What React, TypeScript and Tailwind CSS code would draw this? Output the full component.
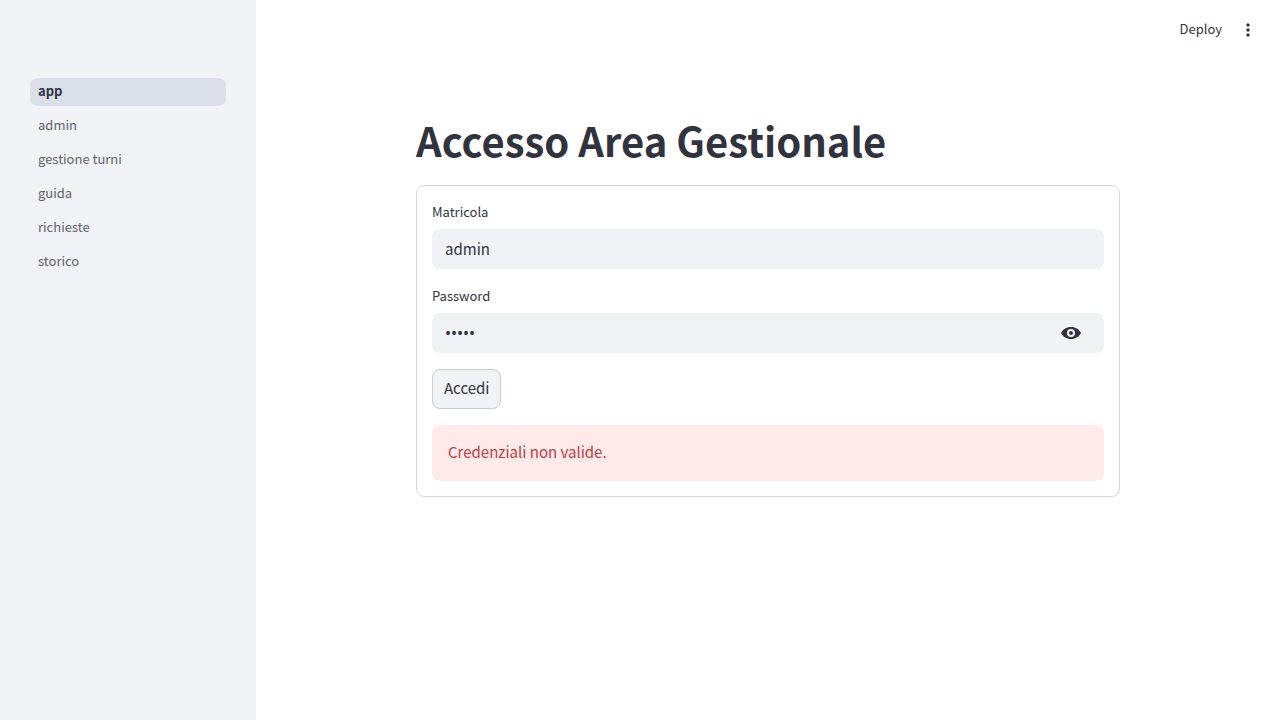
import { useState } from "react";

const pages = ["app", "admin", "gestione turni", "guida", "richieste", "storico"];

function Sidebar() {
  return (
    <aside className="w-64 shrink-0 bg-[#f0f2f6] px-[30px] pt-[78px]">
      <nav>
        <ul className="flex flex-col gap-1.5">
          {pages.map((page, i) => (
            <li key={page}>
              <a
                href={`#${page}`}
                aria-current={i === 0 ? "page" : undefined}
                className={
                  i === 0
                    ? "flex h-7 items-center rounded-lg bg-[#dadfe9] px-2 pb-0.5 text-[13px] font-bold text-[#31333f]"
                    : "flex h-7 items-center rounded-lg px-2 pb-0.5 text-[13px] text-[#5f616b]"
                }
              >
                {page}
              </a>
            </li>
          ))}
        </ul>
      </nav>
    </aside>
  );
}

function Header() {
  return (
    <header className="flex h-[60px] items-center justify-end gap-3.5 pr-5">
      <button type="button" className="pb-0.5 text-[13px]">
        Deploy
      </button>
      <button type="button" aria-label="Menu" className="flex size-6 items-center justify-center">
        <svg viewBox="0 0 24 24" className="size-5" fill="currentColor">
          <path d="M12 8c1.1 0 2-.9 2-2s-.9-2-2-2-2 .9-2 2 .9 2 2 2zm0 2c-1.1 0-2 .9-2 2s.9 2 2 2 2-.9 2-2-.9-2-2-2zm0 6c-1.1 0-2 .9-2 2s.9 2 2 2 2-.9 2-2-.9-2-2-2z" />
        </svg>
      </button>
    </header>
  );
}

export default function App() {
  const [user, setUser] = useState("admin");
  const [password, setPassword] = useState("admin");
  const [visible, setVisible] = useState(false);

  return (
    <div className="flex min-h-screen bg-white font-['Noto_Sans_CJK_SC',sans-serif] text-[#31333f]">
      <Sidebar />
      <div className="min-w-0 flex-1">
        <Header />
        <main className="mx-auto max-w-[736px] px-4 pt-[54px]">
          <h1 className="text-[40px] leading-[53px] font-bold">Accesso Area Gestionale</h1>
          <form
            onSubmit={(e) => e.preventDefault()}
            className="mt-[18px] flex flex-col gap-4 rounded-lg border border-[#d6d6d9] p-[15px]"
          >
            <div>
              <label htmlFor="matricola" className="mb-1 flex h-6 items-center pb-0.5 text-[13px]">
                Matricola
              </label>
              <input
                id="matricola"
                value={user}
                onChange={(e) => setUser(e.target.value)}
                className="block h-10 w-full rounded-lg bg-[#f0f2f6] px-[13px] pb-0.5 text-[15px] outline-none"
              />
            </div>
            <div>
              <label htmlFor="password" className="mb-1 flex h-6 items-center pb-0.5 text-[13px]">
                Password
              </label>
              <div className="flex h-10 items-center rounded-lg bg-[#f0f2f6] pr-[23px]">
                <input
                  id="password"
                  type={visible ? "text" : "password"}
                  value={password}
                  onChange={(e) => setPassword(e.target.value)}
                  className="h-full min-w-0 flex-1 px-[13px] font-['Noto_Sans',sans-serif] text-base outline-none"
                />
                <button type="button" aria-label="Show password" onClick={() => setVisible(!visible)}>
                  <svg viewBox="0 0 20 12" className="h-3 w-5" fill="currentColor" fillRule="evenodd">
                    <path d="M10 0C5.2 0 1.7 2.600 0 6c1.700 3.400 5.200 6 10 6s8.300-2.600 10-6c-1.700-3.400-5.200-6-10-6zM10 2a4 4 0 1 1 0 8 4 4 0 0 1 0-8zM10 4a2 2 0 1 0 0 4 2 2 0 0 0 0-4z" />
                  </svg>
                </button>
              </div>
            </div>
            <button
              type="submit"
              className="h-10 self-start rounded-lg border border-[#caccd3] bg-[#f0f2f6] px-[11px] pb-0.5 text-[15px]"
            >
              Accedi
            </button>
            <div role="alert" className="rounded-lg bg-[#ffe9e9] px-4 pt-[15px] pb-[17px] text-[15px] leading-6 text-[#bd4043]">
              Credenziali non valide.
            </div>
          </form>
        </main>
      </div>
    </div>
  );
}
